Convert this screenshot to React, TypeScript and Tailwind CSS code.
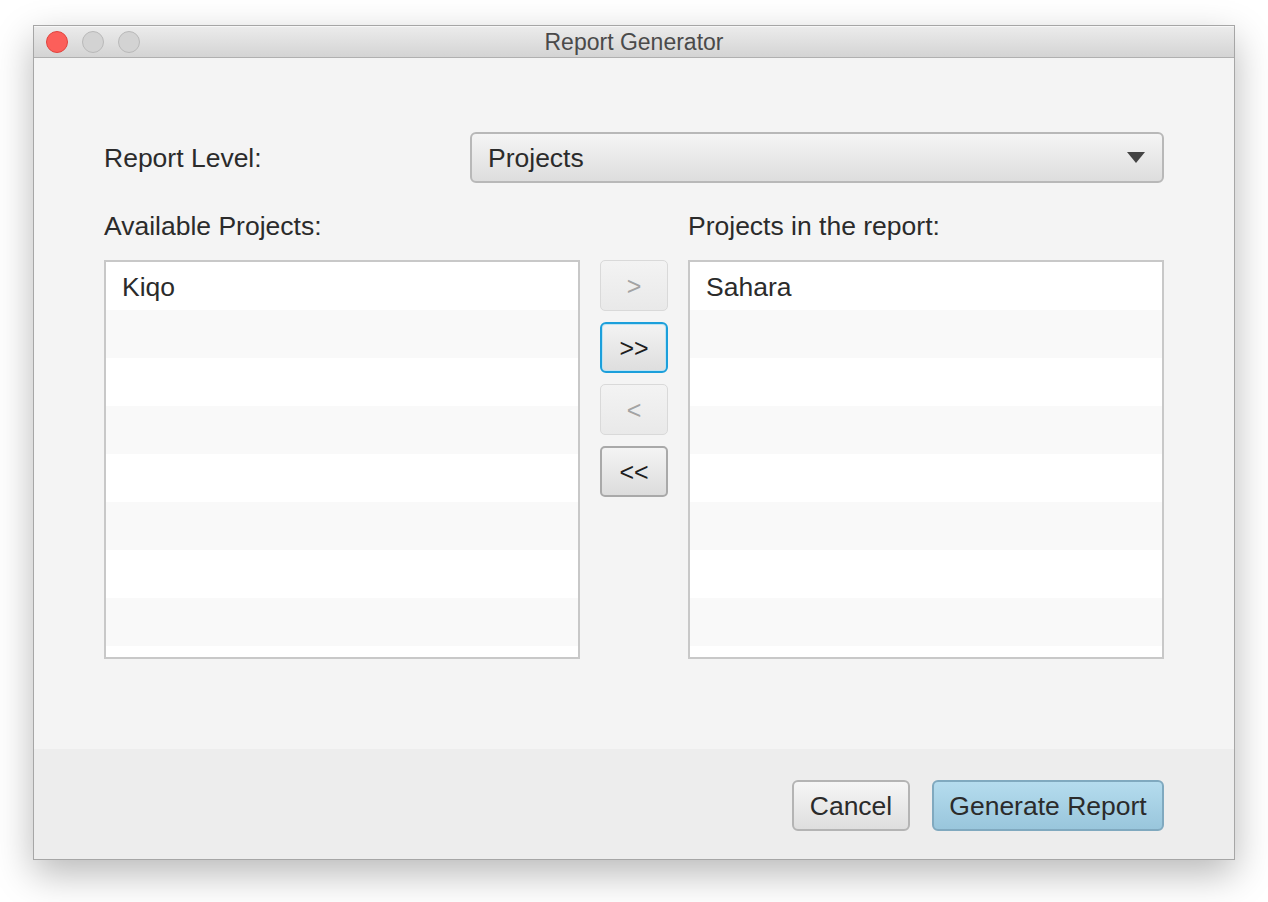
import React from "react";

// Rows in each list view (alternating stripes like a JavaFX ListView)
const ROW_COUNT = 9;

function ListView({ items }: { items: string[] }) {
  return (
    <div className="h-[399px] border-2 border-[#c8c8c8] bg-white overflow-hidden">
      {Array.from({ length: ROW_COUNT }).map((_, i) => (
        <div
          key={i}
          className={`h-[48px] flex items-center pl-4 pt-[3px] text-[26.5px] text-[#2b2b2b] ${
            i % 2 === 1 ? "bg-[#f9f9f9]" : "bg-white"
          }`}
        >
          {items[i] ?? ""}
        </div>
      ))}
    </div>
  );
}

function MoveButton({
  label,
  disabled,
  focused,
}: {
  label: string;
  disabled?: boolean;
  focused?: boolean;
}) {
  if (disabled) {
    return (
      <button className="h-[51px] w-[68px] pt-[3px] rounded-[5px] border border-[#d9d9d9] bg-gradient-to-b from-[#f3f3f3] to-[#e9e9e9] text-[25px] text-[#a3a3a3]">
        {label}
      </button>
    );
  }
  if (focused) {
    return (
      <button className="h-[51px] w-[68px] pt-[3px] rounded-[6px] border-2 border-[#1b9fdb] shadow-[inset_0_0_0_1px_#bfe3f2] bg-gradient-to-b from-[#f3f3f3] to-[#dedede] text-[25px] text-[#1e1e1e]">
        {label}
      </button>
    );
  }
  return (
    <button className="h-[51px] w-[68px] pt-[3px] rounded-[5px] border-2 border-[#a9a9a9] bg-gradient-to-b from-[#f4f4f4] to-[#dcdcdc] text-[25px] text-[#1e1e1e]">
      {label}
    </button>
  );
}

export default function App() {
  return (
    <div
      className="min-h-[902px] w-[1268px] bg-white pt-[25px] pl-[33px]"
      style={{ fontFamily: '"Liberation Sans", Arial, sans-serif' }}
    >
      {/* Window */}
      <div className="w-[1202px] h-[835px] flex flex-col border border-[#a6a6a6] bg-[#f4f4f4] shadow-[0_14px_36px_rgba(0,0,0,0.28)]">
        {/* Title bar */}
        <div className="relative h-[32px] flex-shrink-0 flex items-center justify-center border-b border-[#b0b0b0] bg-gradient-to-b from-[#ececec] to-[#d4d4d4] shadow-[inset_0_1px_0_#f7f7f7]">
          <div className="absolute left-[12px] top-[5px] flex gap-[14px]">
            <span className="block h-[22px] w-[22px] rounded-full bg-[#fc5f5a] border border-[#e0443e]" />
            <span className="block h-[22px] w-[22px] rounded-full bg-[#d3d3d3] border border-[#b9b9b9]" />
            <span className="block h-[22px] w-[22px] rounded-full bg-[#d3d3d3] border border-[#b9b9b9]" />
          </div>
          <span className="text-[23px] text-[#4a4a4a] pt-[1px]">Report Generator</span>
        </div>

        {/* Content */}
        <div className="flex-1 pt-[74px] pl-[70px] pr-[70px]">
          <div className="flex items-center">
            <div className="w-[366px] pt-[3px] text-[26.5px] text-[#2b2b2b]">Report Level:</div>
            <div className="flex-1 h-[51px] flex items-center justify-between pl-[16px] pr-[17px] rounded-[6px] border-2 border-[#b8b8b8] bg-gradient-to-b from-[#f5f5f5] to-[#dddddd]">
              <span className="pt-[3px] text-[26.5px] text-[#2b2b2b]">Projects</span>
              <svg width="18" height="11" viewBox="0 0 18 11">
                <path d="M0 0 H18 L9 11 Z" fill="#444" />
              </svg>
            </div>
          </div>

          <div className="mt-[26px] grid grid-cols-[476px_68px_476px] gap-x-[20px]">
            <div className="pt-[2px] text-[26.5px] leading-[30px] text-[#2b2b2b]">Available Projects:</div>
            <div />
            <div className="pt-[2px] text-[26.5px] leading-[30px] text-[#2b2b2b]">Projects in the report:</div>

            <div className="mt-[19px]">
              <ListView items={["Kiqo"]} />
            </div>
            <div className="mt-[19px] flex flex-col gap-[11px]">
              <MoveButton label=">" disabled />
              <MoveButton label=">>" focused />
              <MoveButton label="<" disabled />
              <MoveButton label="<<" />
            </div>
            <div className="mt-[19px]">
              <ListView items={["Sahara"]} />
            </div>
          </div>
        </div>

        {/* Footer */}
        <div className="h-[110px] flex-shrink-0 flex justify-end items-start gap-[22px] pt-[31px] pr-[70px] bg-[#ededed]">
          <button className="h-[51px] w-[118px] pt-[3px] rounded-[6px] border-2 border-[#b4b4b4] bg-gradient-to-b from-[#f6f6f6] to-[#dedede] text-[26.5px] text-[#2b2b2b]">
            Cancel
          </button>
          <button className="h-[51px] w-[232px] pt-[3px] rounded-[6px] border-2 border-[#80a9bf] bg-gradient-to-b from-[#b5dcee] to-[#99c6dc] text-[26.5px] text-[#2b2b2b]">
            Generate Report
          </button>
        </div>
      </div>
    </div>
  );
}
